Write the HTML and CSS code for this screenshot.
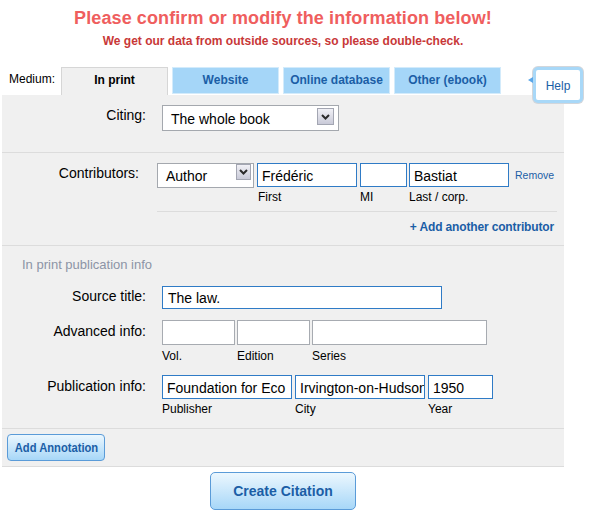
FILE: index.html
```html
<!DOCTYPE html>
<html lang="en">
<head>
<meta charset="utf-8">
<title>Confirm citation</title>
<link rel="stylesheet" href="styles.css">
</head>
<body>
<div class="page">
  <header class="notice">
    <h1 class="notice-title">Please confirm or modify the information below!</h1>
    <p class="notice-sub">We get our data from outside sources, so please double-check.</p>
  </header>

  <nav class="tabs">
    <span class="medium-label">Medium:</span>
    <a class="tab tab-active">In print</a>
    <a class="tab tab-blue">Website</a>
    <a class="tab tab-blue">Online database</a>
    <a class="tab tab-blue">Other (ebook)</a>
    <a class="help">Help</a>
  </nav>

  <div class="panel">
    <section class="section section-citing">
      <div class="row">
        <label class="field-label">Citing:</label>
        <div class="select select-citing">
          <span class="select-text">The whole book</span>
          <span class="select-arrow arrow-lg"><svg width="9" height="6" viewBox="0 0 9 6"><polyline points="1,1 4.5,4.5 8,1" fill="none" stroke="#2b2b2b" stroke-width="2"/></svg></span>
        </div>
      </div>
    </section>

    <section class="section section-contrib">
      <div class="row">
        <label class="field-label label-contrib">Contributors:</label>
        <div class="contrib">
          <div class="contrib-fields">
            <div class="select select-role">
              <span class="select-text">Author</span>
              <span class="select-arrow arrow-sm"><svg width="9" height="6" viewBox="0 0 9 6"><polyline points="1,1 4.5,4.5 8,1" fill="none" stroke="#2b2b2b" stroke-width="2"/></svg></span>
            </div>
            <div class="field">
              <div class="input input-blue w-first">Frédéric</div>
              <span class="sub-label first-sub">First</span>
            </div>
            <div class="field">
              <div class="input input-blue w-mi"></div>
              <span class="sub-label">MI</span>
            </div>
            <div class="field">
              <div class="input input-blue w-last">Bastiat</div>
              <span class="sub-label">Last / corp.</span>
            </div>
            <a class="remove">Remove</a>
          </div>
          <div class="contrib-add"><a class="add-link">+ Add another contributor</a></div>
        </div>
      </div>
    </section>

    <section class="section section-pub">
      <div class="legend">In print publication info</div>
      <div class="row row-source">
        <label class="field-label">Source title:</label>
        <div class="input input-blue w-source h23">The law.</div>
      </div>
      <div class="row row-adv">
        <label class="field-label">Advanced info:</label>
        <div class="group group-adv">
          <div class="field"><div class="input input-gray w-vol h25"></div><span class="sub-label sub-adv">Vol.</span></div>
          <div class="field"><div class="input input-gray w-vol h25"></div><span class="sub-label sub-adv">Edition</span></div>
          <div class="field"><div class="input input-gray w-series h25"></div><span class="sub-label sub-adv">Series</span></div>
        </div>
      </div>
      <div class="row row-pubinfo">
        <label class="field-label">Publication info:</label>
        <div class="group group-pub">
          <div class="field"><div class="input input-blue w-pub h24">Foundation for Eco</div><span class="sub-label">Publisher</span></div>
          <div class="field"><div class="input input-blue w-pub h24">Irvington-on-Hudson</div><span class="sub-label">City</span></div>
          <div class="field"><div class="input input-blue w-year h24">1950</div><span class="sub-label">Year</span></div>
        </div>
      </div>
    </section>

    <section class="section section-annot">
      <button class="btn btn-annot"><span class="btn-annot-text">Add Annotation</span></button>
    </section>
  </div>

  <div class="submit">
    <button class="btn btn-create">Create Citation</button>
  </div>
</div>
</body>
</html>
```

FILE: styles.css
```css
* { box-sizing: border-box; }

body {
  margin: 0;
  background: #fff;
  color: #000;
  font-family: "Liberation Sans", Arial, sans-serif;
  font-size: 12px;
  line-height: 14px;
}

.page {
  width: 562px;
  margin-left: 2px;
}

/* header */
.notice {
  padding-top: 7px;
  text-align: center;
}
.notice-title {
  margin: 0;
  font-size: 18px;
  line-height: 22px;
  font-weight: bold;
  letter-spacing: 0.1px;
  color: #ef5e5e;
}
.notice-sub {
  margin: 4px 0 0;
  font-size: 12px;
  line-height: 16px;
  font-weight: bold;
  color: #c83838;
}

/* tabs */
.tabs {
  position: relative;
  display: flex;
  height: 28px;
  margin-top: 18px;
  padding-left: 7px;
}
.medium-label {
  width: 52px;
  flex: none;
  padding-top: 5px;
  font-size: 12px;
  line-height: 14px;
}
.tab {
  width: 107px;
  flex: none;
  margin-right: 4px;
  font-size: 12px;
  font-weight: bold;
  line-height: 25px;
  text-align: center;
}
.tab-active {
  height: 28px;
  background: #f0f0f0;
  border: 1px solid #d6d6d6;
  border-bottom: none;
  color: #000;
}
.tab-blue {
  height: 27px;
  background: #a5d6f8;
  border: 1px solid #d3ebfb;
  color: #1b5ea6;
}
.help {
  position: absolute;
  left: 531px;
  top: 0;
  width: 50px;
  height: 36px;
  display: flex;
  align-items: center;
  justify-content: center;
  background: #fff;
  border: 3px solid #a8d8f8;
  border-radius: 5px;
  box-shadow: 0 0 0 1px #d2d6db;
  color: #1b5ea6;
  font-size: 12px;
  padding-top: 2px;
}
.help::before {
  content: "";
  position: absolute;
  left: -8px;
  top: 7px;
  border-right: 5px solid #5ba6e8;
  border-top: 3px solid transparent;
  border-bottom: 3px solid transparent;
}

/* panel */
.panel {
  background: #f0f0f0;
  border-bottom: 1px solid #dcdcdc;
}
.section + .section {
  border-top: 1px solid #dcdcdc;
}
.row {
  display: flex;
  align-items: flex-start;
}
.field-label {
  width: 144px;
  flex: none;
  margin-right: 16px;
  padding-top: 2px;
  text-align: right;
  font-size: 14px;
  line-height: 17px;
}
.label-contrib {
  width: 137px;
  margin-right: 18px;
  padding-top: 2px;
}
.row-adv .field-label,
.row-pubinfo .field-label {
  padding-top: 3px;
}

/* select */
.select {
  display: flex;
  justify-content: space-between;
  align-items: flex-start;
  background: #fff;
  border: 1px solid #a4a8ae;
  font-size: 14px;
  line-height: 17px;
}
.select-citing {
  width: 177px;
  height: 26px;
  padding: 5px 4px 0 8px;
}
.select-role {
  width: 97px;
  height: 25px;
  padding: 4px 2px 0 8px;
}
.select-citing .select-arrow { margin-top: -3px; }
.select-role .select-arrow { margin-top: -4px; }
.select-arrow {
  display: flex;
  align-items: center;
  justify-content: center;
  border: 1px solid #a3a6b2;
  background: linear-gradient(#f1f1f6, #c9cad8);
}
.arrow-lg { width: 17px; height: 17px; }
.arrow-sm { width: 15px; height: 16px; }

/* inputs */
.input {
  background: #fff;
  font-size: 14px;
  padding: 1px 0 0 4px;
  height: 24px;
  line-height: 22px;
  white-space: nowrap;
  overflow: hidden;
}
.input-blue { border: 1px solid #2f7bc6; }
.input-gray { border: 1px solid #a7abb1; }
.h23 { height: 23px; line-height: 21px; padding-left: 5px; }
.h24 { height: 24px; line-height: 22px; }
.h25 { height: 25px; }
.w-first { width: 100px; }
.w-mi { width: 47px; }
.w-last { width: 100px; }
.w-source { width: 280px; }
.w-vol { width: 73px; }
.w-series { width: 175px; }
.w-pub { width: 130px; }
.w-year { width: 65px; }

.field {
  display: flex;
  flex-direction: column;
}
.sub-label {
  margin-top: 3px;
  font-size: 12px;
  line-height: 14px;
}
.first-sub { padding-left: 1px; }
.sub-adv { margin-top: 4px; }

/* contributors */
.section-citing {
  padding: 10px 0 21px;
}
.section-contrib {
  padding-top: 10px;
}
.contrib {
  flex: 1;
  margin-right: 7px;
}
.contrib-fields {
  display: flex;
  align-items: flex-start;
  padding-bottom: 7px;
  border-bottom: 1px solid #dcdcdc;
}
.contrib-fields > .select { margin-right: 3px; }
.contrib-fields > .field:nth-child(2) { margin-right: 3px; }
.contrib-fields > .field:nth-child(3) { margin-right: 2px; }
.remove {
  margin: 6px 0 0 6px;
  color: #1b5ea6;
  font-size: 10.5px;
  line-height: 13px;
}
.contrib-add {
  padding: 8px 3px 11px 0;
  text-align: right;
  font-size: 12px;
  line-height: 14px;
}
.add-link {
  color: #1b5ea6;
  font-weight: bold;
  letter-spacing: -0.15px;
}

/* publication */
.section-pub {
  padding: 11px 0 12px;
}
.legend {
  padding-left: 20px;
  margin-bottom: 13px;
  font-size: 13px;
  line-height: 16px;
  color: #8c94a6;
}
.row-adv { margin-top: 11px; }
.row-pubinfo { margin-top: 12px; }
.group {
  display: flex;
  align-items: flex-start;
}
.group-adv { gap: 2px; }
.group-pub { gap: 3px; }

/* buttons */
.btn {
  border: 1px solid #5a9bd8;
  background: linear-gradient(#ecf7fe, #a7d7f8);
  color: #1b5ea6;
  font-family: "Liberation Sans", Arial, sans-serif;
  font-weight: bold;
  cursor: pointer;
  padding: 0;
}
.section-annot {
  padding: 5px;
}
.btn-annot {
  display: flex;
  align-items: center;
  justify-content: center;
  width: 98px;
  height: 27px;
  border-radius: 4px;
  font-size: 13px;
  white-space: nowrap;
}
.btn-annot-text {
  display: inline-block;
  transform: scaleX(0.86);
}
.submit {
  display: flex;
  justify-content: center;
  padding-top: 5px;
}
.btn-create {
  width: 146px;
  height: 38px;
  border-radius: 5px;
  font-size: 14px;
}
```
